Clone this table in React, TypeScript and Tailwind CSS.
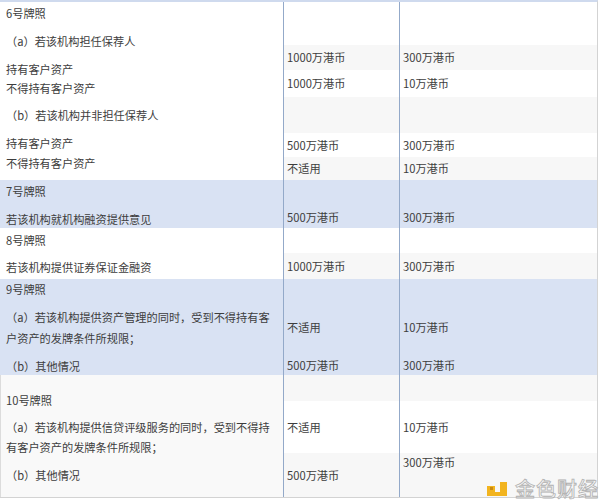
import React from "react";

type SubProps = {
  cls: string;
  a?: string;
  b?: string;
  bCls?: string;
};

function Sub({ cls, a, b, bCls = "items-center" }: SubProps) {
  return (
    <div className={`flex ${cls}`}>
      <div className="w-[116px] border-r border-[#93a9c9] flex items-center pl-[3px] whitespace-nowrap">
        {a}
      </div>
      <div className={`w-[197px] flex ${bCls} pl-[3px] whitespace-nowrap`}>{b}</div>
    </div>
  );
}

function L({ cls, children }: { cls: string; children: React.ReactNode }) {
  return <div className={`h-[18px] leading-[18px] whitespace-nowrap ${cls}`}>{children}</div>;
}

export default function App() {
  return (
    <div className="w-[600px] h-[504px] bg-white relative overflow-hidden font-['Noto_Sans_CJK_SC','Noto_Sans',sans-serif] text-[11.2px] text-[#3d3d3d]">
      <div className="w-[598px] border-t-2 border-t-[#cfdaee] border-r border-r-[#d3d3d3] border-b border-b-[#d3d3d3]">
        {/* 6号牌照 */}
        <div className="flex h-[178px]">
          <div className="w-[284px] border-r border-[#93a9c9] pl-[6px] bg-white">
            <L cls="mt-[2px]">6号牌照</L>
            <L cls="mt-[10px]">（a）若该机构担任保荐人</L>
            <L cls="mt-[10px]">持有客户资产</L>
            <L cls="mt-[1px]">不得持有客户资产</L>
            <L cls="mt-[9px]">（b）若该机构并非担任保荐人</L>
            <L cls="mt-[10px]">持有客户资产</L>
            <L cls="mt-[2px]">不得持有客户资产</L>
          </div>
          <div className="flex flex-col">
            <Sub cls="h-[43px] bg-white" />
            <Sub cls="h-[25px] bg-[#f7f7f7]" a="1000万港币" b="300万港币" />
            <Sub cls="h-[27px] bg-white" a="1000万港币" b="10万港币" />
            <Sub cls="h-[36px] bg-[#f7f7f7]" />
            <Sub cls="h-[24px] bg-white" a="500万港币" b="300万港币" />
            <Sub cls="h-[23px] bg-[#f7f7f7]" a="不适用" b="10万港币" />
          </div>
        </div>

        {/* 7号牌照 */}
        <div className="flex h-[48px] bg-[#d9e2f3]">
          <div className="w-[284px] border-r border-[#93a9c9] pl-[6px]">
            <L cls="mt-[2px]">7号牌照</L>
            <L cls="mt-[10px]">若该机构就机构融资提供意见</L>
          </div>
          <div className="w-[116px] border-r border-[#93a9c9] pl-[3px]">
            <L cls="mt-[28px]">500万港币</L>
          </div>
          <div className="w-[197px] pl-[3px]">
            <L cls="mt-[28px]">300万港币</L>
          </div>
        </div>

        {/* 8号牌照 */}
        <div className="flex h-[51px]">
          <div className="w-[284px] border-r border-[#93a9c9] pl-[6px] bg-white">
            <L cls="mt-[3px]">8号牌照</L>
            <L cls="mt-[9px]">若该机构提供证券保证金融资</L>
          </div>
          <div className="flex flex-col">
            <Sub cls="h-[25px] bg-white" />
            <Sub cls="h-[26px] bg-[#f7f7f7]" a="1000万港币" b="300万港币" />
          </div>
        </div>

        {/* 9号牌照 */}
        <div className="flex h-[96px] bg-[#d9e2f3]">
          <div className="w-[284px] border-r border-[#93a9c9] pl-[6px]">
            <L cls="mt-[1px]">9号牌照</L>
            <L cls="mt-[10px]">（a）若该机构提供资产管理的同时，受到不得持有客</L>
            <L cls="mt-[3px]">户资产的发牌条件所规限；</L>
            <L cls="mt-[10px]">（b）其他情况</L>
          </div>
          <div className="w-[116px] border-r border-[#93a9c9] pl-[3px]">
            <L cls="mt-[39px]">不适用</L>
            <L cls="mt-[20px]">500万港币</L>
          </div>
          <div className="w-[197px] pl-[3px]">
            <L cls="mt-[39px]">10万港币</L>
            <L cls="mt-[20px]">300万港币</L>
          </div>
        </div>

        {/* 10号牌照 */}
        <div className="flex h-[122px]">
          <div className="w-[284px] border-l border-l-[#dcdcdc] border-r border-r-[#93a9c9] pl-[5px] bg-[#f9f9f9]">
            <L cls="mt-[16px]">10号牌照</L>
            <L cls="mt-[9px]">（a）若该机构提供信贷评级服务的同时，受到不得持</L>
            <L cls="mt-[2px]">有客户资产的发牌条件所规限；</L>
            <L cls="mt-[10px]">（b）其他情况</L>
          </div>
          <div className="flex flex-col">
            <Sub cls="h-[26px] bg-[#f7f7f7]" />
            <Sub cls="h-[52px] bg-white" a="不适用" b="10万港币" />
            <Sub cls="h-[44px] bg-[#f7f7f7]" a="500万港币" b="300万港币" bCls="items-start pt-[1px]" />
          </div>
        </div>
      </div>

      {/* watermark */}
      <div className="absolute left-[487px] top-[478px] flex items-center gap-[6px]">
        <svg width="22" height="16" viewBox="0 0 22 16">
          <rect x="0" y="5" width="8" height="8" fill="#f2b41f" />
          <rect x="3" y="6" width="3" height="3" fill="#c98a12" />
          <rect x="13" y="1" width="7" height="14" fill="#f2b41f" />
          <rect x="0" y="11" width="20" height="4" fill="#f2b41f" />
        </svg>
        <span className="text-[20px] leading-[22px] font-medium tracking-[1px] text-[#f6f6f6] [-webkit-text-stroke:0.8px_#b0b0b0]">
          金色财经
        </span>
      </div>
    </div>
  );
}
